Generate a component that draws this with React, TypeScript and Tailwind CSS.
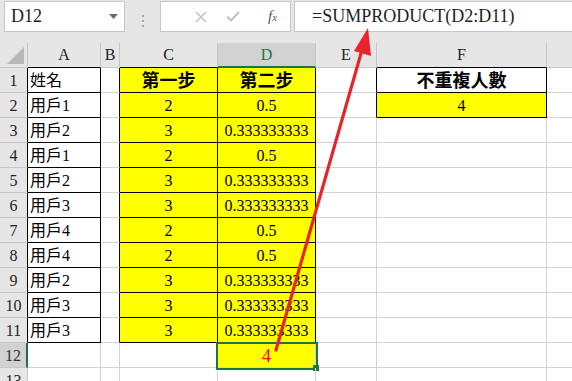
import React from "react";

const names = ["姓名", "用戶1", "用戶2", "用戶1", "用戶2", "用戶3", "用戶4", "用戶4", "用戶2", "用戶3", "用戶3"];
const steps = [2, 3, 2, 3, 3, 2, 2, 3, 3, 3];

function Toolbar() {
  return (
    <div className="flex h-[43px] bg-[#e6e6e6] pt-[1px]">
      {/* name box */}
      <div className="ml-[4px] flex h-[31px] w-[121px] items-center border border-[#c6c6c6] bg-white pl-[6px] pr-[6px]">
        <span className="flex-1 text-[18px] text-[#222]">D12</span>
        <svg width="9" height="5" viewBox="0 0 9 5">
          <polygon points="0,0 9,0 4.5,5" fill="#6b6b6b" />
        </svg>
      </div>
      <div className="flex w-[35px] flex-col items-center justify-center gap-[3px] pb-[2px]">
        <span className="h-[2px] w-[2px] bg-[#a6a6a6]" />
        <span className="h-[2px] w-[2px] bg-[#a6a6a6]" />
        <span className="h-[2px] w-[2px] bg-[#a6a6a6]" />
      </div>
      {/* cancel / enter / fx */}
      <div className="flex h-[31px] w-[131px] items-center border border-[#c6c6c6] bg-white">
        <div className="flex w-[46px] justify-end">
          <svg width="12" height="12" viewBox="0 0 12 12">
            <path d="M1 1 L11 11 M11 1 L1 11" stroke="#c3c3c3" strokeWidth="1.6" />
          </svg>
        </div>
        <div className="flex w-[46px] justify-center pl-[6px]">
          <svg width="14" height="11" viewBox="0 0 14 11">
            <path d="M1 5.5 L5 9.5 L13 1" stroke="#c3c3c3" strokeWidth="2" fill="none" />
          </svg>
        </div>
        <div className="flex flex-1 justify-center pr-[2px] pl-[4px]">
          <span className="text-[15px] italic text-[#555]">
            f<span className="text-[11px]">x</span>
          </span>
        </div>
      </div>
      <div className="ml-[3px] flex h-[31px] flex-1 items-center border border-r-0 border-[#c6c6c6] bg-white pl-[17px]">
        <span className="text-[18px] text-[#222]">=SUMPRODUCT(D2:D11)</span>
      </div>
    </div>
  );
}

function HeaderRow() {
  const hd = "flex h-[25px] items-end justify-center border-r border-b border-[#c6c6c6] bg-[#e6e6e6] pb-[3px] text-[16px] leading-[18px] text-[#222]";
  return (
    <div className="flex">
      <div className={`${hd} w-[28px] items-center justify-end pr-[3px] pb-[3px]`}>
        <svg width="17" height="17" viewBox="0 0 17 17">
          <polygon points="0,17 17,17 17,0" fill="#b9b9b9" />
        </svg>
      </div>
      <div className={`${hd} w-[73px] border-b-black`}>A</div>
      <div className={`${hd} w-[19px]`}>B</div>
      <div className={`${hd} w-[98px] border-b-black`}>C</div>
      <div className="flex h-[25px] w-[98px] items-end justify-center border-r border-b-2 border-r-[#c6c6c6] border-b-[#217346] bg-[#d2d2d2] pb-[2px] text-[16px] leading-[18px] text-[#217346]">
        D
      </div>
      <div className={`${hd} w-[61px]`}>E</div>
      <div className={`${hd} w-[170px] border-b-black`}>F</div>
      <div className={`${hd} flex-1 border-r-0`} />
    </div>
  );
}

function Row({ n }: { n: number }) {
  const base = "flex h-[25px] items-end border-r border-b pb-[2px] text-[16px] leading-[18px] text-black";
  const inTable = n <= 11;
  const s = n >= 2 && n <= 11 ? steps[n - 2] : null;
  const selected = n === 12;

  return (
    <div className="flex">
      <div
        className={`flex h-[25px] w-[28px] items-end justify-center border-b border-[#c6c6c6] pb-[2px] text-[16px] leading-[18px] ${
          selected ? "border-r-2 border-r-[#217346] bg-[#d2d2d2] text-[#333]" : "border-r bg-[#e6e6e6] text-[#222]"
        } ${inTable ? "border-r-black" : ""}`}
      >
        {n}
      </div>
      <div className={`${base} w-[73px] pl-[2px] ${inTable ? "border-black" : "border-[#d4d4d4]"}`}>
        {inTable ? names[n - 1] : ""}
      </div>
      <div className={`${base} w-[19px] border-b-[#d4d4d4] ${inTable ? "border-r-black" : "border-r-[#d4d4d4]"}`} />
      <div
        className={`${base} w-[98px] justify-center ${
          inTable ? "border-black bg-[#ffff00]" : "border-[#d4d4d4]"
        } ${n === 1 ? "text-[18px] font-bold" : ""}`}
      >
        {n === 1 ? "第一步" : s ?? ""}
      </div>
      <div
        className={`${base} relative w-[98px] justify-center ${
          inTable ? "border-black bg-[#ffff00]" : selected ? "border-[#d4d4d4] bg-[#ffff00]" : "border-[#d4d4d4]"
        } ${n === 1 ? "text-[18px] font-bold" : ""}`}
      >
        {n === 1 ? "第二步" : s === 2 ? "0.5" : s === 3 ? "0.333333333" : ""}
        {selected && (
          <>
            <span className="text-[18px] text-[#ff0000]">4</span>
            <div className="absolute left-[-2px] top-[-1px] h-[28px] w-[102px] border-2 border-[#217346]" />
            <div className="absolute left-[95px] top-[22px] h-[6px] w-[6px] bg-[#217346]" />
          </>
        )}
      </div>
      <div className={`${base} w-[61px] border-b-[#d4d4d4] ${n <= 2 ? "border-r-black" : "border-r-[#d4d4d4]"}`} />
      <div
        className={`${base} w-[170px] justify-center ${
          n === 1 ? "border-black text-[18px] font-bold" : n === 2 ? "border-black bg-[#ffff00]" : "border-[#d4d4d4]"
        }`}
      >
        {n === 1 ? "不重複人數" : n === 2 ? "4" : ""}
      </div>
      <div className={`${base} flex-1 border-r-0 border-[#d4d4d4]`} />
    </div>
  );
}

export default function App() {
  const rows = Array.from({ length: 13 }, (_, i) => i + 1);
  return (
    <div className="relative h-[381px] w-[572px] overflow-hidden bg-white font-['Liberation_Serif','Times_New_Roman','DejaVu_Serif','Noto_Sans_CJK_TC',serif]">
      <Toolbar />
      <HeaderRow />
      {rows.map((n) => (
        <Row key={n} n={n} />
      ))}
      <svg className="pointer-events-none absolute left-0 top-0" width="572" height="381" viewBox="0 0 572 381">
        <line x1="276" y1="350" x2="362" y2="50" stroke="#e8232b" strokeWidth="3.2" strokeLinecap="round" />
        <polygon points="368,28 371,56 354,51" fill="#e8232b" />
      </svg>
    </div>
  );
}
